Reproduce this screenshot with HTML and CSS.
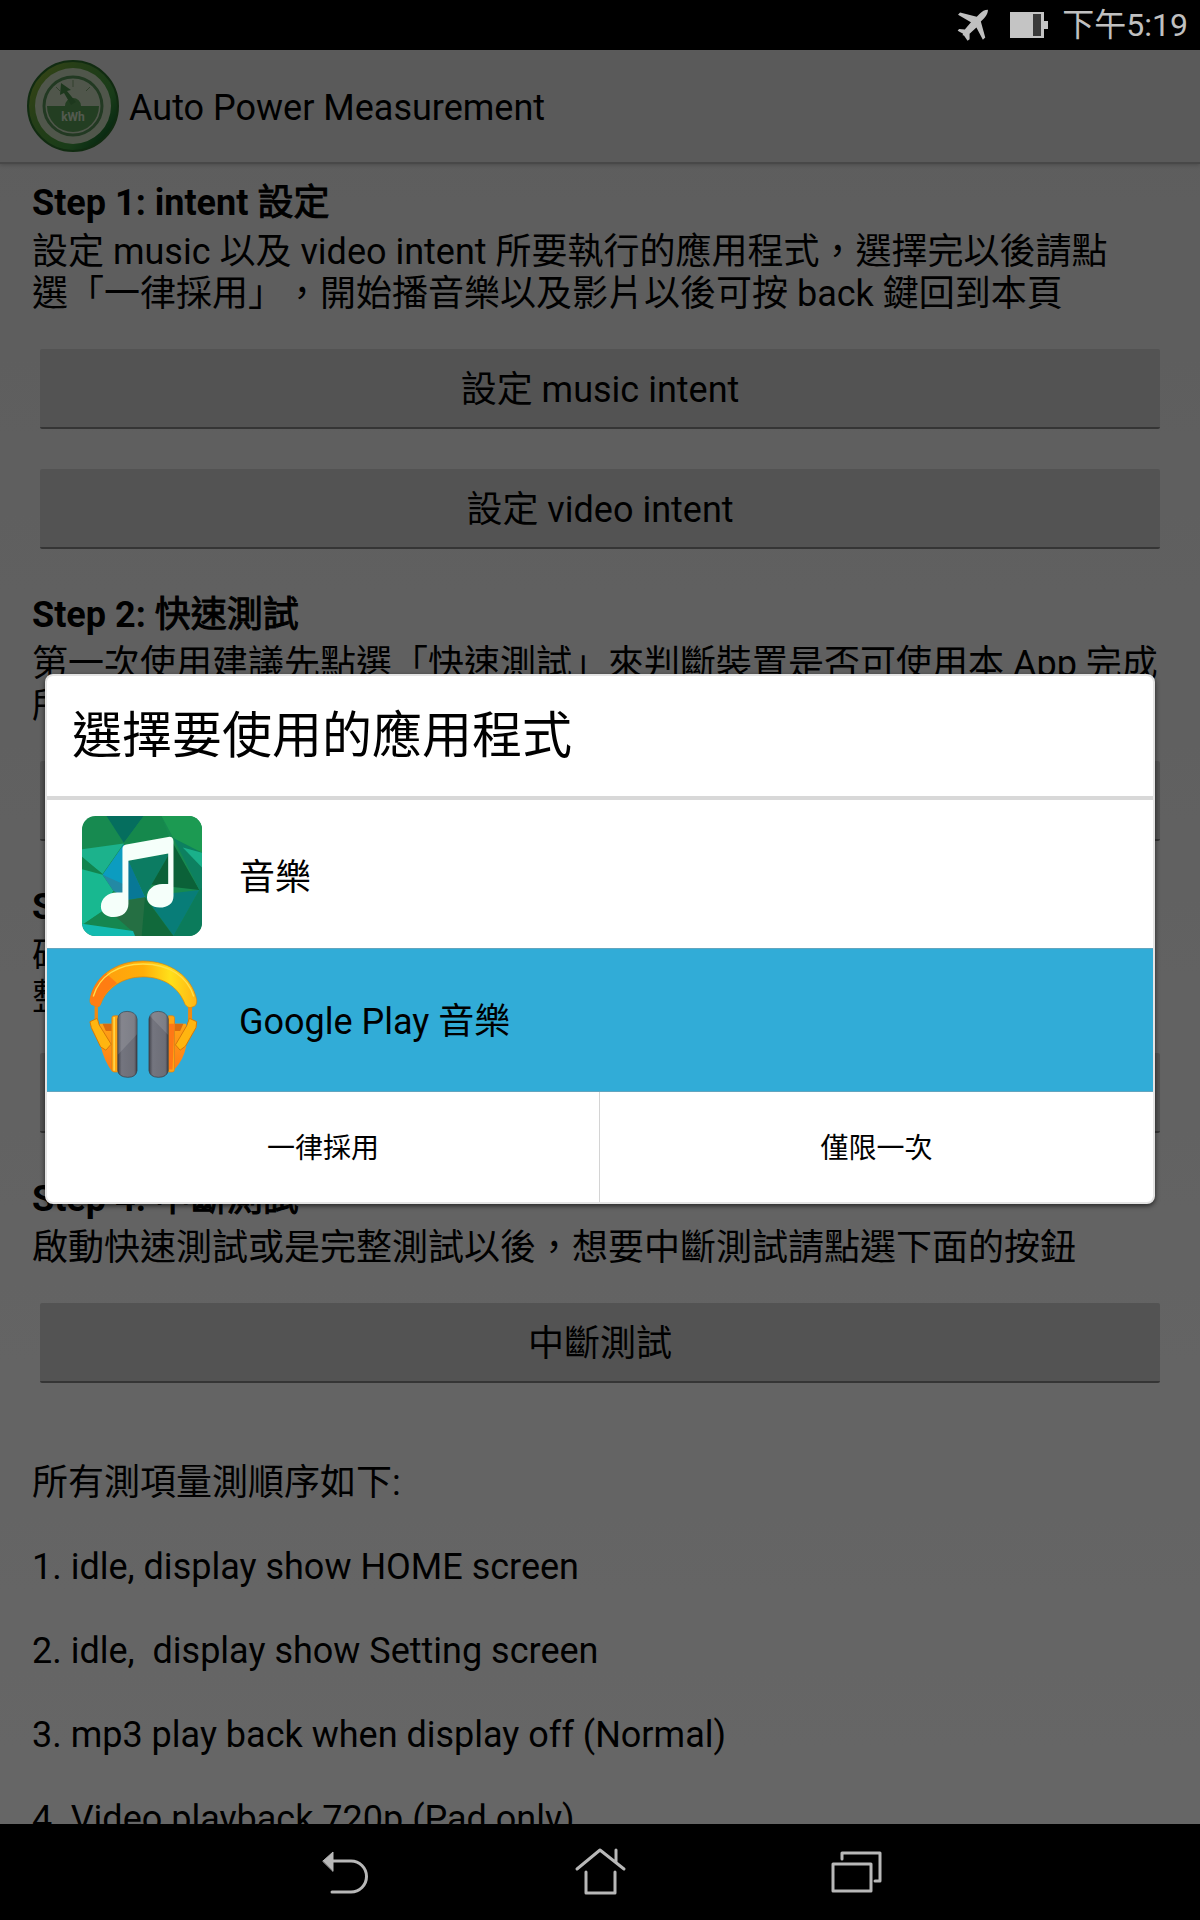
FILE: index.html
```html
<!DOCTYPE html>
<html lang="zh-Hant">
<head>
<meta charset="utf-8">
<meta name="viewport" content="width=device-width, initial-scale=1">
<title>Auto Power Measurement</title>
<link rel="stylesheet" href="styles.css">
</head>
<body>
<header class="status-bar">
  <svg class="status-plane" viewBox="172 28 94 94" aria-hidden="true"><path d="M263 30C253 30 246 34 238 43L230 51L181 38L175 45L213 67L195 88L178 87L174 92L190 101Q186 107 192 105L203 121L209 117L209 101L229 82L248 118L255 112L242 65L251 56Q263 43 263 30Z" fill="#c0c0c0"/></svg>
  <svg class="status-battery" viewBox="0 0 38 26" aria-hidden="true"><path d="M0 0H34V9H38V17H34V26H0Z" fill="#c4c4c4"/><path d="M23 2H31V24H23Z" fill="#3a3a3a"/></svg>
  <time class="clock">下午5:19</time>
</header>

<div class="screen">
  <div class="app">
    <header class="action-bar">
      <svg class="app-icon" viewBox="0 0 92 92" aria-hidden="true">
        <defs>
          <linearGradient id="ring" x1="0" y1="0.1" x2="1" y2="0.9">
            <stop offset="0" stop-color="#8fae35"/><stop offset="0.3" stop-color="#5f9c3c"/><stop offset="0.7" stop-color="#3f963f"/><stop offset="1" stop-color="#004d22"/>
          </linearGradient>
        </defs>
        <circle cx="46" cy="46" r="45" fill="url(#ring)" stroke="#2c6b2c" stroke-width="2"/>
        <circle cx="46" cy="46" r="38" fill="#c8d8bc"/>
        <circle cx="46" cy="46" r="29" fill="none" stroke="#559055" stroke-width="3"/>
        <path d="M20 46H38A8 8 0 0 1 54 46H72A26 26 0 0 1 20 46Z" fill="#599c55"/>
        <path d="M44 45L37 33L33 35L34 23L44 30L40 31L49 42Z" fill="#4a8c4a"/>
        <path d="M46 20V27M63 27L59 31M29 27L33 31" stroke="#7da070" stroke-width="1"/>
        <text x="46" y="61" class="gauge-text" text-anchor="middle">kWh</text>
      </svg>
      <h1 class="app-title">Auto Power Measurement</h1>
    </header>
    <main class="content">
      <section class="step">
        <h2 class="step-title">Step 1: intent <span class="han">設定</span></h2>
        <p class="text">設定 music 以及 video intent 所要執行的應用程式，選擇完以後請點<br>選「一律採用」，開始播音樂以及影片以後可按 back 鍵回到本頁</p>
        <div class="actions">
          <button class="btn" type="button">設定 music intent</button>
          <button class="btn" type="button">設定 video intent</button>
        </div>
      </section>
      <section class="step">
        <h2 class="step-title">Step 2: <span class="han">快速測試</span></h2>
        <p class="text">第一次使用建議先點選「快速測試」來判斷裝置是否可使用本 App 完成<br>所有測項</p>
        <div class="actions">
          <button class="btn" type="button">快速測試</button>
        </div>
      </section>
      <section class="step">
        <h2 class="step-title">Step 3: <span class="han">完整測試</span></h2>
        <p class="text">確定快速測試可以完成以後，即可開始完<br>整測試</p>
        <div class="actions">
          <button class="btn" type="button">完整測試</button>
        </div>
      </section>
      <section class="step">
        <h2 class="step-title">Step 4: <span class="han">中斷測試</span></h2>
        <p class="text">啟動快速測試或是完整測試以後，想要中斷測試請點選下面的按鈕</p>
        <div class="actions">
          <button class="btn" type="button">中斷測試</button>
        </div>
      </section>
      <section class="order">
        <p class="text">所有測項量測順序如下:</p>
        <p class="text">1. idle, display show HOME screen</p>
        <p class="text">2. idle,  display show Setting screen</p>
        <p class="text">3. mp3 play back when display off (Normal)</p>
        <p class="text">4. Video playback 720p (Pad only)</p>
      </section>
    </main>
  </div>

  <div class="scrim">
    <div class="dialog" role="dialog" aria-modal="true" aria-labelledby="dialog-title">
      <h2 class="dialog-title" id="dialog-title">選擇要使用的應用程式</h2>
      <div class="choices">
        <button class="choice" type="button">
          <svg class="choice-icon" viewBox="36 45 362 362" aria-hidden="true">
            <defs><clipPath id="tile"><rect x="36" y="45" width="362" height="362" rx="40"/></clipPath></defs>
            <g clip-path="url(#tile)">
              <path d="M36 45H398V407H36Z" fill="#178a50"/>
              <path d="M110 45H222L162 126Z" fill="#056e5e"/>
              <path d="M222 45L276 45L300 112L162 128Z" fill="#15884c"/>
              <path d="M276 45H398V156L312 112Z" fill="#1c9a52"/>
              <path d="M36 145L162 128L98 220L36 172Z" fill="#1cb28c"/>
              <path d="M36 168L98 220L36 206Z" fill="#12844f"/>
              <path d="M36 206L98 222L130 270L108 325L42 370L36 370Z" fill="#18b890"/>
              <path d="M162 130L98 222L160 262L200 290L226 290L176 180Z" fill="#0c9cc0"/>
              <path d="M98 222L160 250V290L130 270Z" fill="#2389a4"/>
              <path d="M176 178L226 290L160 300V240Z" fill="#087896"/>
              <path d="M176 180L300 158L246 252L226 288Z" fill="#0c7c62"/>
              <path d="M300 112L312 130L390 268L246 252L300 158Z" fill="#0b6138"/>
              <path d="M312 112L398 156V268H390Z" fill="#0d8060"/>
              <path d="M340 140L398 156V200Z" fill="#1ab08a"/>
              <path d="M226 288L390 268L312 407Z" fill="#087d78"/>
              <path d="M390 268L398 262V407H312Z" fill="#0b7b5b"/>
              <path d="M226 290L312 407H216L150 340Z" fill="#11693b"/>
              <path d="M170 300L226 290L216 407H190L100 340Z" fill="#256f43"/>
              <path d="M42 370L110 325L190 395Z" fill="#158750"/>
              <path d="M36 370L190 392L196 407H36Z" fill="#13bab0"/>
            </g>
            <path d="M158 144Q158 133 170 131L296 108Q312 106 312 122V286C312 308 296 321 270 321C247 321 232 308 232 290C232 266 254 250 278 250H296V158L176 180V310C176 335 158 350 132 350C108 350 93 336 93 318C93 294 114 276 142 276H158Z" fill="#f5fffa"/>
          </svg>
          <span class="choice-label">音樂</span>
        </button>
        <button class="choice choice-selected" type="button" aria-pressed="true">
          <svg class="choice-icon" viewBox="36 48 362 362" aria-hidden="true">
            <defs>
              <linearGradient id="band" x1="0" y1="0" x2="1" y2="0"><stop offset="0" stop-color="#ff9a10"/><stop offset="0.5" stop-color="#ffae08"/><stop offset="0.75" stop-color="#ffe01a"/><stop offset="1" stop-color="#ffb514"/></linearGradient>
              <linearGradient id="pad" x1="0" y1="0" x2="1" y2="0"><stop offset="0" stop-color="#43444c"/><stop offset="0.2" stop-color="#74757f"/><stop offset="0.85" stop-color="#6c6d76"/><stop offset="1" stop-color="#3f4047"/></linearGradient>
              <linearGradient id="cup" x1="0" y1="0" x2="0" y2="1"><stop offset="0" stop-color="#ffa515"/><stop offset="1" stop-color="#ff7a16"/></linearGradient>
            </defs>
            <path d="M74 184L84 188V236H74ZM356 188L368 184V236H356Z" fill="#f08a12"/>
            <path d="M60 168C72 98 138 51 220 51C302 51 368 98 382 168C383 178 380 186 374 188L362 192Q354 192 347 182C328 130 282 99 220 99C160 99 110 132 92 182Q88 192 80 188L64 182Q59 176 60 168Z" fill="url(#band)" stroke="#d98208" stroke-width="2"/>
            <path d="M60 168C66 134 84 108 108 88L142 118C116 134 100 156 92 182Q88 192 80 188L64 182Z" fill="#ff7d12"/>
            <path d="M70 158C88 96 144 60 220 60C298 60 354 98 373 158" fill="none" stroke="#ffe04a" stroke-width="4"/>
            <path d="M90 240H126V384Q102 350 93 310ZM315 240H350V310Q342 350 315 378Z" fill="url(#cup)"/>
            <path d="M98 240H126V262H108ZM315 240H342L332 262H315Z" fill="#d96c10"/>
            <path d="M126 222Q126 216 134 216H144V386H134Q126 386 126 378ZM297 216H308Q315 216 315 222V378Q315 386 308 386H297Z" fill="#ffa511" stroke="#e47d0a" stroke-width="2"/>
            <path d="M133 220V382" stroke="#ffd64b" stroke-width="5"/>
            <path d="M60 234L82 224L88 244L124 302L108 320L92 310L64 252ZM382 234L360 224L352 246L318 304L332 320L348 308L380 252Z" fill="#ffb510" stroke="#d6780a" stroke-width="3"/>
            <path d="M298 240H315L309 378H298Z" fill="#ff7716"/>
            <path d="M144 226Q146 204 172 203Q199 204 202 226V382Q199 402 174 402Q147 401 144 382Z" fill="url(#pad)" stroke="#36373d" stroke-width="2"/>
            <path d="M238 226Q241 204 266 203Q292 204 296 226V382Q292 402 266 402Q241 401 238 382Z" fill="url(#pad)" stroke="#36373d" stroke-width="2"/>
            <path d="M144 334L202 272V226Q199 204 172 203Q146 204 144 226ZM238 214L296 274V226Q292 204 266 203Q246 204 240 216Z" fill="#ffffff" opacity="0.12"/>
          </svg>
          <span class="choice-label">Google Play 音樂</span>
        </button>
      </div>
      <div class="dialog-actions">
        <button class="dialog-btn dialog-btn-split" type="button">一律採用</button>
        <button class="dialog-btn" type="button">僅限一次</button>
      </div>
    </div>
  </div>
</div>

<nav class="nav-bar" aria-label="系統導覽">
  <button class="nav-btn" type="button" aria-label="返回">
    <svg class="nav-icon" viewBox="0 0 60 60" aria-hidden="true"><path d="M9 19L19 10V29Z" fill="#b8b8b8" stroke-width="1"/><path d="M18 19H37A15 15 0 0 1 37 50H18" /></svg>
  </button>
  <button class="nav-btn" type="button" aria-label="首頁">
    <svg class="nav-icon" viewBox="0 0 60 60" aria-hidden="true"><path d="M7 27L30 8L54 27M46 8V20M16 30V51H45V30"/></svg>
  </button>
  <button class="nav-btn" type="button" aria-label="最近使用">
    <svg class="nav-icon" viewBox="0 0 60 60" aria-hidden="true"><path d="M7 22H45V49H7ZM16 17V11H54V39H49"/></svg>
  </button>
</nav>
</body>
</html>
```

FILE: styles.css
```css
* {
  box-sizing: border-box;
}

body {
  margin: 0;
  height: 100vh;
  display: flex;
  flex-direction: column;
  background: #000;
  color: #000;
  font-family: Roboto, "Noto Sans CJK TC", sans-serif;
  font-size: 36px;
  line-height: 42px;
  text-spacing-trim: space-all;
}

h1,
h2,
p {
  margin: 0;
}

button {
  margin: 0;
  border: 0;
  padding: 0;
  background: none;
  color: inherit;
  font: inherit;
}

svg {
  display: block;
}

.status-bar {
  flex: none;
  height: 50px;
  padding-right: 12px;
  display: flex;
  align-items: center;
  justify-content: flex-end;
  color: #c0c0c0;
}

.status-plane {
  width: 32px;
  height: 32px;
  margin-right: 21px;
}

.status-battery {
  width: 38px;
  height: 26px;
  margin-right: 14px;
}

.clock {
  font-size: 32px;
}

.screen {
  position: relative;
  flex: 1;
  min-height: 0;
  overflow: hidden;
}

.app {
  height: 100%;
  overflow: hidden;
  background: linear-gradient(#e8e8e8, #fff);
}

.action-bar {
  height: 114px;
  padding-left: 27px;
  display: flex;
  align-items: center;
  gap: 10px;
  background: #e1e1e1;
  border-bottom: 2px solid #b4b4b4;
  box-shadow: 0 1px 4px rgba(0, 0, 0, 0.2);
}

.app-icon {
  width: 92px;
  height: 92px;
}

.gauge-text {
  font-size: 12px;
  font-weight: 700;
  fill: #d0e0c8;
}

.app-title {
  padding-top: 4px;
  font-size: 36px;
  font-weight: 400;
}

.content {
  padding: 18px 32px;
}

.step {
  margin-bottom: 45px;
}

.step-title {
  margin-bottom: 7px;
  font-size: 36px;
  font-weight: 700;
}

/* Han glyphs in headings are emboldened lightly rather than set in the bold face */
.han {
  font-weight: 400;
  -webkit-text-stroke: 1px #000;
}

.text {
  white-space: pre-wrap;
}

.actions {
  display: grid;
  gap: 40px;
  padding: 34px 8px 0;
}

.btn {
  height: 80px;
  padding-top: 4px;
  background: #cfcfcf;
  border-bottom: 2px solid #858585;
  border-radius: 2px;
}

.order {
  display: grid;
  gap: 42px;
  padding-top: 34px;
}

.scrim {
  position: absolute;
  inset: 0;
  display: flex;
  align-items: center;
  padding: 4px 45px 0;
  background: rgba(0, 0, 0, 0.6);
}

.dialog {
  flex: 1;
  overflow: hidden;
  background: #fff;
  border: 2px solid #e4e4e4;
  border-radius: 8px;
  box-shadow: 0 2px 5px rgba(0, 0, 0, 0.6);
}

.dialog-title {
  padding: 30px 25px;
  border-bottom: 4px solid #d8d8d8;
  font-size: 50px;
  line-height: 60px;
  font-weight: 400;
}

.choices {
  display: grid;
  padding-top: 4px;
}

.choice {
  height: 144px;
  padding-left: 35px;
  display: flex;
  align-items: center;
  gap: 37px;
  text-align: left;
}

.choice-selected {
  background: #31acd7;
  border-top: 1px solid #62a5bf;
  border-bottom: 1px solid #62a5bf;
}

.choice-icon {
  width: 120px;
  height: 120px;
}

.choice-label {
  padding-top: 4px;
}

.dialog-actions {
  display: grid;
  grid-template-columns: 1fr 1fr;
}

.dialog-btn {
  height: 110px;
  padding-top: 4px;
  font-size: 28px;
}

.dialog-btn-split {
  border-right: 1px solid #d4d4d4;
}

.nav-bar {
  flex: none;
  height: 96px;
  display: flex;
  justify-content: center;
}

.nav-btn {
  flex: 0 1 256px;
  display: flex;
  align-items: center;
  justify-content: center;
}

.nav-icon {
  width: 60px;
  height: 60px;
  fill: none;
  stroke: #b8b8b8;
  stroke-width: 3;
  stroke-linecap: round;
  stroke-linejoin: round;
}
```
